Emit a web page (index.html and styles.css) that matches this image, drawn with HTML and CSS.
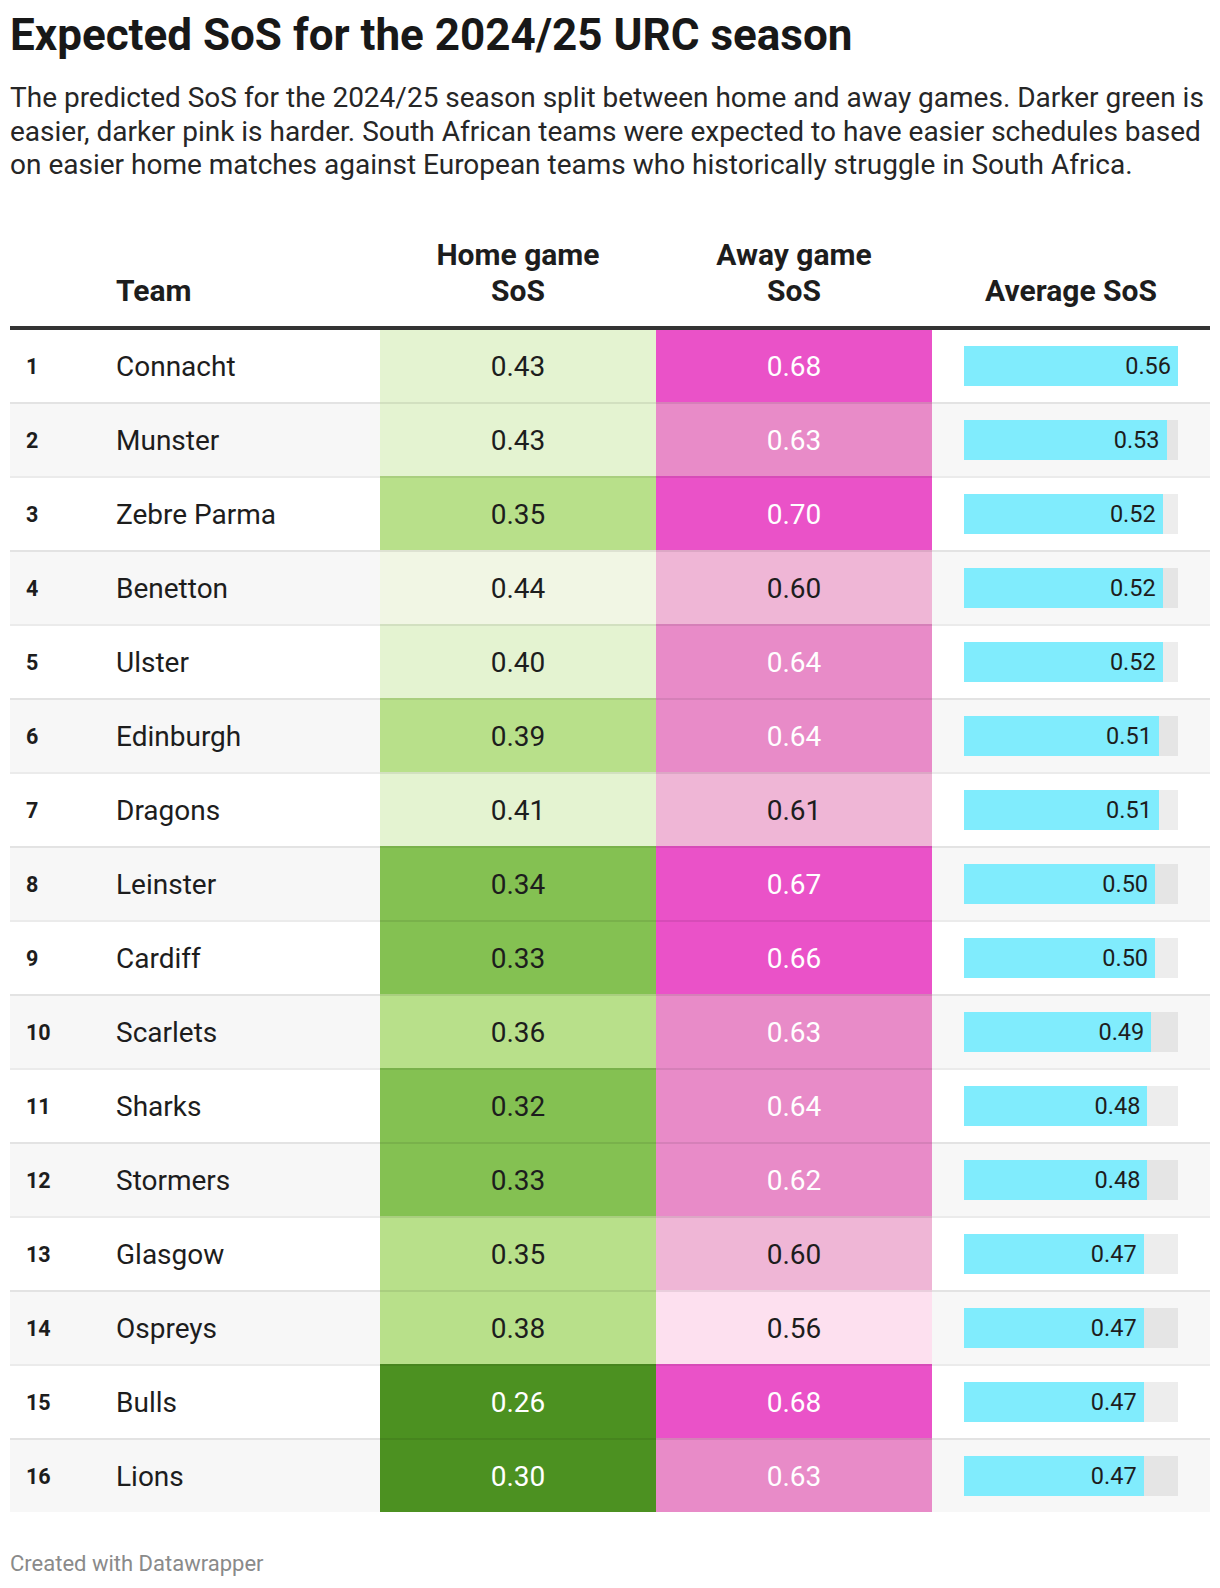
FILE: index.html
```html
<!DOCTYPE html>
<html lang="en">
<head>
<meta charset="utf-8">
<title>Expected SoS for the 2024/25 URC season</title>
<link rel="stylesheet" href="styles.css">
</head>
<body>
<div class="chart">
  <h1 class="title">Expected SoS for the 2024/25 URC season</h1>
  <p class="desc">The predicted SoS for the 2024/25 season split between home and away games. Darker green is easier, darker pink is harder. South African teams were expected to have easier schedules based on easier home matches against European teams who historically struggle in South Africa.</p>

  <div class="table">
    <div class="head">
      <div class="h-rank"></div>
      <div class="h-team">Team</div>
      <div class="h-num">Home game<br>SoS</div>
      <div class="h-num">Away game<br>SoS</div>
      <div class="h-num">Average SoS</div>
    </div>

    <div class="row">
      <div class="c-rank">1</div><div class="c-team">Connacht</div>
      <div class="c-num g1">0.43</div><div class="c-num p4">0.68</div>
      <div class="c-avg"><div class="track"><div class="bar" style="width:100%">0.56</div></div></div>
    </div>
    <div class="row">
      <div class="c-rank">2</div><div class="c-team">Munster</div>
      <div class="c-num g1">0.43</div><div class="c-num p3">0.63</div>
      <div class="c-avg"><div class="track"><div class="bar" style="width:94.64%">0.53</div></div></div>
    </div>
    <div class="row">
      <div class="c-rank">3</div><div class="c-team">Zebre Parma</div>
      <div class="c-num g2">0.35</div><div class="c-num p4">0.70</div>
      <div class="c-avg"><div class="track"><div class="bar" style="width:92.86%">0.52</div></div></div>
    </div>
    <div class="row">
      <div class="c-rank">4</div><div class="c-team">Benetton</div>
      <div class="c-num g0">0.44</div><div class="c-num p2">0.60</div>
      <div class="c-avg"><div class="track"><div class="bar" style="width:92.86%">0.52</div></div></div>
    </div>
    <div class="row">
      <div class="c-rank">5</div><div class="c-team">Ulster</div>
      <div class="c-num g1">0.40</div><div class="c-num p3">0.64</div>
      <div class="c-avg"><div class="track"><div class="bar" style="width:92.86%">0.52</div></div></div>
    </div>
    <div class="row">
      <div class="c-rank">6</div><div class="c-team">Edinburgh</div>
      <div class="c-num g2">0.39</div><div class="c-num p3">0.64</div>
      <div class="c-avg"><div class="track"><div class="bar" style="width:91.07%">0.51</div></div></div>
    </div>
    <div class="row">
      <div class="c-rank">7</div><div class="c-team">Dragons</div>
      <div class="c-num g1">0.41</div><div class="c-num p2">0.61</div>
      <div class="c-avg"><div class="track"><div class="bar" style="width:91.07%">0.51</div></div></div>
    </div>
    <div class="row">
      <div class="c-rank">8</div><div class="c-team">Leinster</div>
      <div class="c-num g3">0.34</div><div class="c-num p4">0.67</div>
      <div class="c-avg"><div class="track"><div class="bar" style="width:89.29%">0.50</div></div></div>
    </div>
    <div class="row">
      <div class="c-rank">9</div><div class="c-team">Cardiff</div>
      <div class="c-num g3">0.33</div><div class="c-num p4">0.66</div>
      <div class="c-avg"><div class="track"><div class="bar" style="width:89.29%">0.50</div></div></div>
    </div>
    <div class="row">
      <div class="c-rank">10</div><div class="c-team">Scarlets</div>
      <div class="c-num g2">0.36</div><div class="c-num p3">0.63</div>
      <div class="c-avg"><div class="track"><div class="bar" style="width:87.5%">0.49</div></div></div>
    </div>
    <div class="row">
      <div class="c-rank">11</div><div class="c-team">Sharks</div>
      <div class="c-num g3">0.32</div><div class="c-num p3">0.64</div>
      <div class="c-avg"><div class="track"><div class="bar" style="width:85.71%">0.48</div></div></div>
    </div>
    <div class="row">
      <div class="c-rank">12</div><div class="c-team">Stormers</div>
      <div class="c-num g3">0.33</div><div class="c-num p3">0.62</div>
      <div class="c-avg"><div class="track"><div class="bar" style="width:85.71%">0.48</div></div></div>
    </div>
    <div class="row">
      <div class="c-rank">13</div><div class="c-team">Glasgow</div>
      <div class="c-num g2">0.35</div><div class="c-num p2">0.60</div>
      <div class="c-avg"><div class="track"><div class="bar" style="width:83.93%">0.47</div></div></div>
    </div>
    <div class="row">
      <div class="c-rank">14</div><div class="c-team">Ospreys</div>
      <div class="c-num g2">0.38</div><div class="c-num p1">0.56</div>
      <div class="c-avg"><div class="track"><div class="bar" style="width:83.93%">0.47</div></div></div>
    </div>
    <div class="row">
      <div class="c-rank">15</div><div class="c-team">Bulls</div>
      <div class="c-num g4">0.26</div><div class="c-num p4">0.68</div>
      <div class="c-avg"><div class="track"><div class="bar" style="width:83.93%">0.47</div></div></div>
    </div>
    <div class="row">
      <div class="c-rank">16</div><div class="c-team">Lions</div>
      <div class="c-num g4">0.30</div><div class="c-num p3">0.63</div>
      <div class="c-avg"><div class="track"><div class="bar" style="width:83.93%">0.47</div></div></div>
    </div>
  </div>

  <div class="footer">Created with Datawrapper</div>
</div>
</body>
</html>
```

FILE: styles.css
```css
* { box-sizing: border-box; }

html, body {
  margin: 0;
  padding: 0;
  background: #ffffff;
}

body {
  font-family: Roboto, "Liberation Sans", Arial, sans-serif;
  color: #1d1d1d;
}

.chart {
  padding: 8px 10px 0 10px;
}

.title {
  margin: 0;
  font-size: 44px;
  line-height: 54px;
  font-weight: 700;
  color: #181818;
}

.desc {
  margin: 19px 0 0 0;
  font-size: 28px;
  line-height: 33.5px;
  font-weight: 400;
  color: #262626;
}

.table {
  margin-top: 55.5px;
}

.head,
.row {
  display: grid;
  grid-template-columns: 90px 280px 276px 276px 278px;
}

.head {
  align-items: end;
  padding-bottom: 17px;
  border-bottom: 4px solid #333333;
  font-size: 30px;
  line-height: 36px;
  font-weight: 700;
  color: #1d1d1d;
}

.h-team {
  padding-left: 16px;
}

.h-num {
  text-align: center;
}

.row:nth-child(odd) {
  background: #f7f7f7;
}

.row > div {
  height: 72px;
  display: flex;
  align-items: center;
  box-sizing: content-box;
}

.row + .row > div {
  border-top: 2px solid rgba(0, 0, 0, 0.08);
}

.c-rank {
  padding-left: 16px;
  font-size: 21.5px;
  font-weight: 700;
}

.c-team {
  padding-left: 16px;
  font-size: 28px;
}

.c-num {
  justify-content: center;
  font-size: 28px;
  color: #1d1d1d;
}

.c-avg {
  padding: 0 32px;
}

.track {
  width: 100%;
  height: 40px;
  background: rgba(0, 0, 0, 0.07);
}

.bar {
  height: 40px;
  background: #80ecfd;
  text-align: right;
  padding-right: 7px;
  font-size: 23.5px;
  line-height: 40px;
  color: #1d1d1d;
}

/* home game greens */
.g0 { background: #f1f6e4; }
.g1 { background: #e4f3d1; }
.g2 { background: #b8e08a; }
.g3 { background: #84c152; }
.g4 { background: #4c9121; color: #ffffff; }

/* away game pinks */
.p1 { background: #fde0ef; }
.p2 { background: #efb6d6; }
.p3 { background: #e88bc8; color: #ffffff; }
.p4 { background: #ea52c8; color: #ffffff; }

.footer {
  margin-top: 39px;
  font-size: 22px;
  line-height: 26px;
  color: #8a8a8a;
}
```
